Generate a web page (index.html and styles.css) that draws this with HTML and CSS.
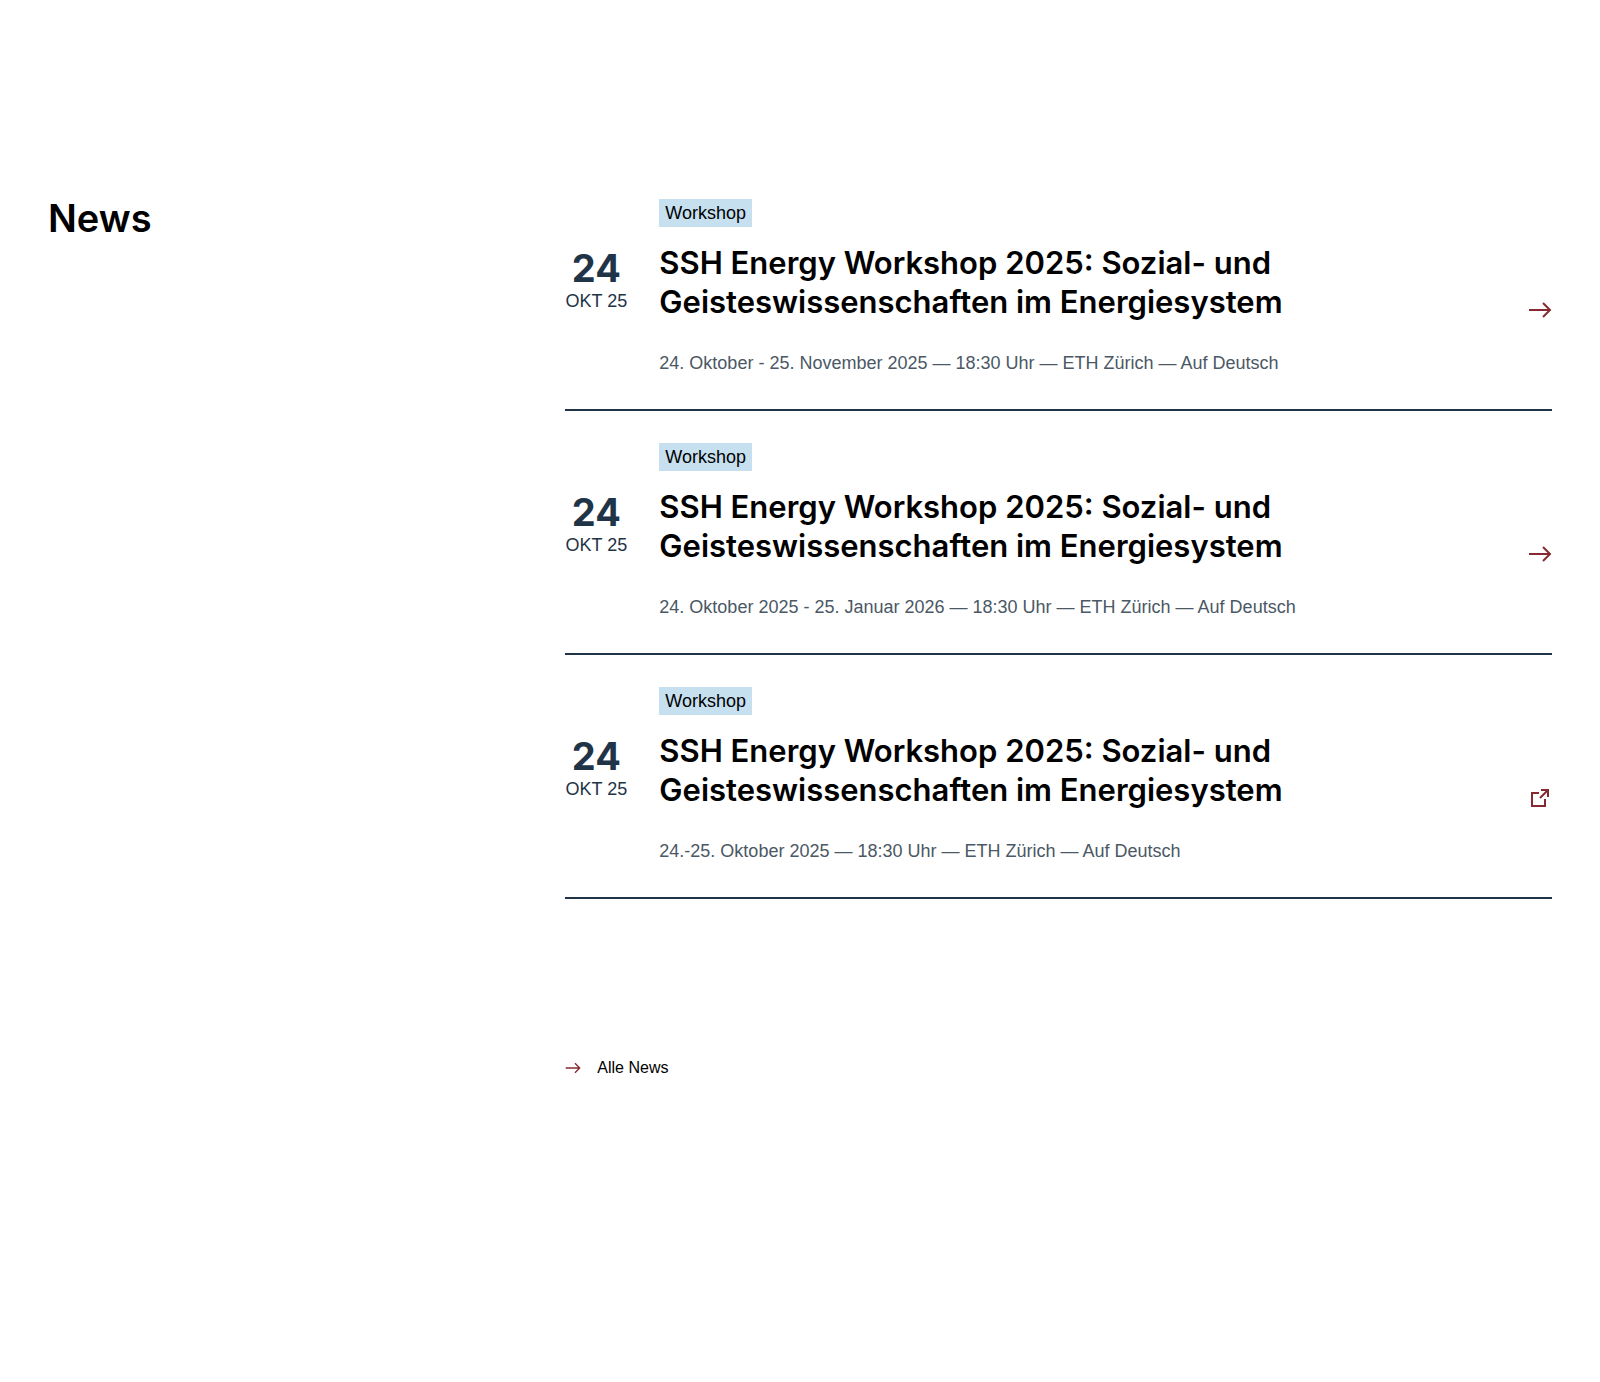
FILE: index.html
```html
<!DOCTYPE html>
<html lang="de">
<head>
<meta charset="utf-8">
<meta name="viewport" content="width=device-width, initial-scale=1">
<title>News</title>
<link rel="stylesheet" href="styles.css">
</head>
<body>
<svg class="sprite" aria-hidden="true">
  <symbol id="arrow" viewBox="0 0 24 24">
    <path d="M1 12H22M15 5L22 12L15 19" fill="none" stroke="currentColor" stroke-width="2"/>
  </symbol>
  <symbol id="external" viewBox="0 0 24 24">
    <path d="M11 7H4V20H17V13M12 12L20 4M13 4H20V11" fill="none" stroke="currentColor" stroke-width="2"/>
  </symbol>
</svg>
<main class="news">
  <h2 class="news-heading">News</h2>
  <div class="news-content">
    <ul class="news-list">
      <li>
        <a class="item" href="#">
          <span class="tag">Workshop</span>
          <span class="date"><span class="day">24</span><span class="month">OKT 25</span></span>
          <span class="text">
            <span class="title">SSH Energy Workshop 2025: Sozial- und Geisteswissenschaften im Energiesystem</span>
            <span class="meta">24. Oktober - 25. November 2025 — 18:30 Uhr — ETH Zürich — Auf Deutsch</span>
          </span>
          <svg class="icon" aria-hidden="true"><use href="#arrow"/></svg>
        </a>
      </li>
      <li>
        <a class="item" href="#">
          <span class="tag">Workshop</span>
          <span class="date"><span class="day">24</span><span class="month">OKT 25</span></span>
          <span class="text">
            <span class="title">SSH Energy Workshop 2025: Sozial- und Geisteswissenschaften im Energiesystem</span>
            <span class="meta">24. Oktober 2025 - 25. Januar 2026 — 18:30 Uhr — ETH Zürich — Auf Deutsch</span>
          </span>
          <svg class="icon" aria-hidden="true"><use href="#arrow"/></svg>
        </a>
      </li>
      <li>
        <a class="item" href="#">
          <span class="tag">Workshop</span>
          <span class="date"><span class="day">24</span><span class="month">OKT 25</span></span>
          <span class="text">
            <span class="title">SSH Energy Workshop 2025: Sozial- und Geisteswissenschaften im Energiesystem</span>
            <span class="meta">24.-25. Oktober 2025 — 18:30 Uhr — ETH Zürich — Auf Deutsch</span>
          </span>
          <svg class="icon" aria-hidden="true"><use href="#external"/></svg>
        </a>
      </li>
    </ul>
    <a class="all-news" href="#">
      <svg class="icon icon-small" aria-hidden="true"><use href="#arrow"/></svg>
      Alle News
    </a>
  </div>
</main>
</body>
</html>
```
FILE: styles.css
```css
* {
  box-sizing: border-box;
}

body {
  margin: 0;
  background: #fff;
  color: #000;
  font-family: "Liberation Sans", Arial, sans-serif;
  font-size: 18px;
  line-height: 27px;
}

a {
  color: inherit;
  text-decoration: none;
}

.sprite {
  position: absolute;
  width: 0;
  height: 0;
}

.news {
  display: grid;
  grid-template-columns: repeat(12, 1fr);
  column-gap: 48px;
  padding: 192px 48px;
}

.news-heading {
  grid-column: span 4;
  margin: 0;
  font-family: Inter, "Liberation Sans", sans-serif;
  font-size: 38px;
  font-weight: 600;
  line-height: 52px;
}

.news-content {
  grid-column: span 8;
  padding-top: 7px;
}

.news-list {
  margin: 0;
  padding: 0;
  list-style: none;
}

.news-list li {
  border-bottom: 2px solid #1f3447;
}

.news-list li + li {
  padding-top: 32px;
}

.item {
  display: grid;
  grid-template-columns: 62px 1fr 24px;
  column-gap: 32px;
  row-gap: 16px;
  padding-bottom: 32px;
}

.tag {
  grid-column: 2;
  justify-self: start;
  padding: 0 6px;
  background: #c7e0f0;
  line-height: 28px;
}

.date {
  display: flex;
  flex-direction: column;
  grid-column: 1;
  align-items: center;
  padding-top: 5px;
  color: #1f3447;
}

.day {
  font-family: Inter, "Liberation Sans", sans-serif;
  font-size: 38px;
  font-weight: 700;
  line-height: 40px;
}

.month {
  white-space: nowrap;
}

.text {
  display: flex;
  flex-direction: column;
  gap: 29px;
}

.title {
  font-family: Inter, "Liberation Sans", sans-serif;
  font-size: 31px;
  font-weight: 600;
  line-height: 39px;
}

.meta {
  color: #4b5865;
}

.icon {
  align-self: center;
  width: 24px;
  height: 24px;
  color: #852b30;
}

.icon-small {
  width: 16px;
  height: 16px;
}

.all-news {
  display: inline-flex;
  gap: 16px;
  margin-top: 157px;
  font-size: 16px;
  line-height: 24px;
}
```
